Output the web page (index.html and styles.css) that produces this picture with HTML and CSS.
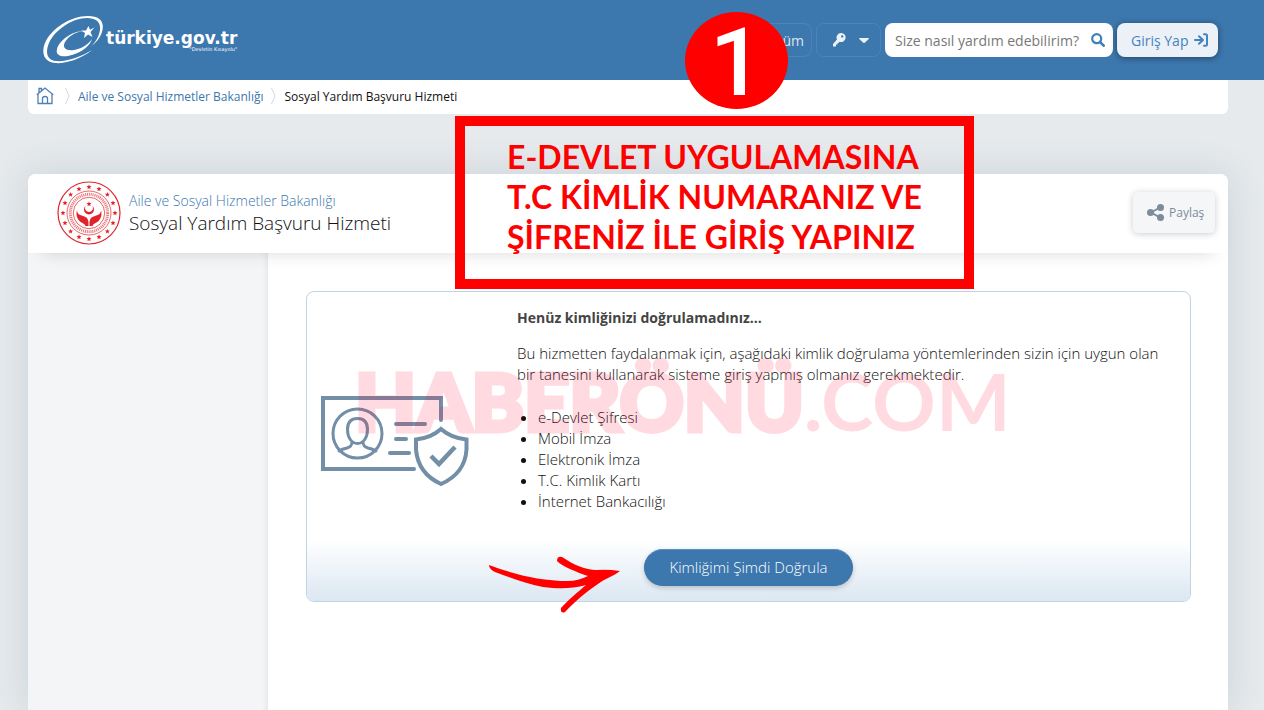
FILE: index.html
```html
<!DOCTYPE html>
<html lang="tr">
<head>
<meta charset="utf-8">
<meta name="viewport" content="width=device-width, initial-scale=1">
<title>Sosyal Yardım Başvuru Hizmeti</title>
<link rel="stylesheet" href="styles.css">
</head>
<body>
<header class="topbar">
  <div class="container topbar-inner">
    <a class="brand" href="#">
      <svg class="brand-mark" viewBox="0 0 62 50" aria-hidden="true">
        <path fill="#fff" d="M50 35C38 45 22 49 13 48C2 47-1 38 3 28C9 14 28 1 46 1C58 1 63 7 60 17C58 23 54 28 49 31C54 27 57 21 58 15C59 7 54 3 45 3C30 3 13 15 7 28C3 38 5 45 14 46C24 47 39 42 50 35Z"/>
        <path fill="#fff" d="M41 16C30 16 17 26 15 34C13 41 21 43 30 40C40 37 48 31 50 24C45 31 38 34 32 35C24 36 20 33 23 27C26 22 33 17 41 16Z"/>
        <path fill="#fff" d="m52.500 12.500-4 4.500 2 5-4.500-2.500-4 3.500 1-5-4-2.500h5l2.500-4.500 1.500 3.700z"/>
      </svg>
      <span class="brand-words"><span class="brand-name">türkiye.gov.tr</span><span class="brand-tag">"Devletin Kısayolu"</span></span>
    </a>
    <nav class="tools">
      <button class="ghost" type="button">Hızlı Çözüm</button>
      <button class="ghost key" type="button" aria-label="Hızlı giriş">
        <svg width="13" height="15" viewBox="0 0 13 15" aria-hidden="true"><path fill="#edf2f7" fill-rule="evenodd" d="M8 0a4.500 4.500 0 1 1-1.500 8.700L5.500 10H4.500v1.500H3V13.500H0v-2.500l4-4.500A4.500 4.500 0 0 1 8 0Zm1.200 2.200a1.200 1.200 0 1 0 0 2.400 1.200 1.200 0 0 0 0-2.400Z"/></svg>
        <svg width="10" height="5" viewBox="0 0 10 5" aria-hidden="true"><path fill="#edf2f7" d="M.5 0h9q.8.300.2 1L5.700 4.700q-.7.500-1.400 0L.3 1Q-.3.300.5 0Z"/></svg>
      </button>
      <form class="search">
        <input type="text" aria-label="Arama" placeholder="Size nasıl yardım edebilirim?">
        <button type="button" aria-label="Ara"><svg width="14" height="14" viewBox="0 0 14 14" aria-hidden="true"><circle cx="5.700" cy="5.700" r="4.500" fill="none" stroke="#4080b8" stroke-width="2.200"/><path d="m9 9 3.700 3.700" stroke="#4080b8" stroke-width="2.600" stroke-linecap="round"/></svg></button>
      </form>
      <button class="login" type="button">Giriş Yap
        <svg width="14" height="14" viewBox="0 0 14 14" aria-hidden="true"><path fill="none" stroke="#4583be" stroke-width="2" stroke-linecap="round" stroke-linejoin="round" d="M1 7h7M5 3.200 9 7l-4 3.800M10 1.300h1.500q1.500 0 1.500 1.500v8.400q0 1.500-1.500 1.500H10"/></svg>
      </button>
    </nav>
  </div>
</header>

<div class="container page">
  <nav class="crumbs" aria-label="Konum">
    <a class="home" href="#" aria-label="Ana sayfa"><svg width="18" height="18" viewBox="0 0 18 18" aria-hidden="true"><path fill="none" stroke="#4a82b5" stroke-width="1.300" d="M.8 7.700 9 1l8.200 6.700M2 7v9.500h14V7M6.500 16.500v-5q0-2 2.500-2t2.500 2v5M3 5.500v-4h2.500v2"/></svg></a>
    <svg width="5" height="18" viewBox="0 0 5 18" aria-hidden="true"><path fill="none" stroke="#d5d9dd" d="M.5 1 4 9 .5 17"/></svg>
    <a href="#">Aile ve Sosyal Hizmetler Bakanlığı</a>
    <svg width="5" height="18" viewBox="0 0 5 18" aria-hidden="true"><path fill="none" stroke="#d5d9dd" d="M.5 1 4 9 .5 17"/></svg>
    <span>Sosyal Yardım Başvuru Hizmeti</span>
  </nav>

  <main class="card">
    <div class="card-head">
      <svg class="seal" width="64" height="64" viewBox="0 0 64 64" aria-hidden="true">
        <defs><path id="star" fill="#e1242b" d="m0-2.500.7 1.600 1.800.1-1.400 1.200.5 1.800L0 1.200l-1.600 1 .5-1.800-1.400-1.200 1.800-.1z"/></defs>
        <g fill="none" stroke="#e1242b">
          <circle cx="32" cy="32" r="31" stroke-width="1.200"/>
          <circle cx="32" cy="32" r="22" stroke-width=".7"/>
          <circle cx="32" cy="32" r="18.700" stroke-width="3" stroke-dasharray="1.100 .8" stroke-opacity=".6"/>
          <circle cx="32" cy="32" r="15.700" stroke-width=".7"/>
        </g>
        <g transform="translate(32 32)">
          <use href="#star" y="-26"/><use href="#star" x="10" y="-24"/><use href="#star" x="18.400" y="-18.400"/><use href="#star" x="24" y="-10"/>
          <use href="#star" x="26"/><use href="#star" x="24" y="10"/><use href="#star" x="18.400" y="18.400"/><use href="#star" x="10" y="24"/>
          <use href="#star" y="26"/><use href="#star" x="-10" y="24"/><use href="#star" x="-18.400" y="18.400"/><use href="#star" x="-24" y="10"/>
          <use href="#star" x="-26"/><use href="#star" x="-24" y="-10"/><use href="#star" x="-18.400" y="-18.400"/><use href="#star" x="-10" y="-24"/>
          <use href="#star" y="-9"/>
        </g>
        <path fill="#e1242b" d="M28.500 25a5 5 0 1 0 7 0 4 4 0 1 1-7 0ZM20 29c0 4 3 5 6 6 4 1 5 3 5.500 6v4h-3c-1-3-4-3-6-5-3-3-3.500-7-2.500-11ZM44 29c0 4-3 5-6 6-4 1-5 3-5.500 6v4h3c1-3 4-3 6-5 3-3 3.500-7 2.500-11Z"/>
      </svg>
      <h1 class="titles"><a href="#">Aile ve Sosyal Hizmetler Bakanlığı</a><span>Sosyal Yardım Başvuru Hizmeti</span></h1>
      <button class="share" type="button">
        <svg width="17" height="17" viewBox="0 0 17 17" aria-hidden="true"><path d="M13 3.500 4 8.500l9 5" fill="none" stroke="#7b8c9c" stroke-width="2"/><g fill="#7b8c9c"><circle cx="13.500" cy="3.500" r="3.500"/><circle cx="3.500" cy="8.500" r="3.500"/><circle cx="13.500" cy="13.500" r="3.500"/></g></svg>
        Paylaş
      </button>
    </div>
    <div class="card-body">
      <aside class="side"></aside>
      <div class="content">
        <section class="verify">
          <div class="verify-main">
            <div class="picture">
              <svg width="149" height="92" viewBox="0 0 149 92" aria-hidden="true">
                <g fill="none" stroke="#738fa8" stroke-linecap="round">
                  <path stroke-width="4" d="M93 74H2V3h118v22"/>
                  <circle cx="36.500" cy="38.500" r="24.500" stroke-width="3"/>
                  <path stroke-width="3" d="M36.500 23.500c-7 0-10 4-10 11 0 8 4 14 10 14s10-6 10-14c0-7-3-11-10-11ZM31 47c0 4-2 5-5 6q-5 1-8 3M42 47c0 4 2 5 5 6q5 1 8 3"/>
                  <path stroke-width="4" d="M75 29h29M75 44h10M69 58h19"/>
                  <path stroke-width="4" d="M120 34q-10 9-25 10.500v10q2 24 25 34.500 24-10.500 25.500-34.500v-10Q130 43 120 34Z"/>
                  <path stroke-width="4.500" stroke-linecap="butt" d="m110 61 8 8 16-17"/>
                </g>
              </svg>
            </div>
            <div class="copy">
              <h2>Henüz kimliğinizi doğrulamadınız...</h2>
              <p>Bu hizmetten faydalanmak için, aşağıdaki kimlik doğrulama yöntemlerinden sizin için uygun olan bir tanesini kullanarak sisteme giriş yapmış olmanız gerekmektedir.</p>
              <ul><li>e-Devlet Şifresi</li><li>Mobil İmza</li><li>Elektronik İmza</li><li>T.C. Kimlik Kartı</li><li>İnternet Bankacılığı</li></ul>
            </div>
          </div>
          <div class="verify-foot"><button class="primary" type="button">Kimliğimi Şimdi Doğrula</button></div>
        </section>
      </div>
    </div>
  </main>
</div>

<div class="step">1</div>
<div class="callout">E-DEVLET UYGULAMASINA<br>T.C KİMLİK NUMARANIZ VE<br>ŞİFRENİZ İLE GİRİŞ YAPINIZ</div>
<div class="watermark"><b>HABERÖNÜ</b>.COM</div>
<svg class="arrow" width="134" height="58" viewBox="0 0 134 58" aria-hidden="true"><path fill="#f00" d="M1 9C25 18 52 25 80 25Q90 25 100 20C88 16 74 10 69 5Q69 0 74 1C86 9 98 14 108 14Q120 13 132 15C126 20 116 23 110 28C96 37 86 47 77 56Q72 58 73 52C82 42 90 36 98 29C84 33 70 33 55 31C38 28 21 21 7 16Q1 13 1 9Z"/></svg>
</body>
</html>
```

FILE: styles.css
```css
* { box-sizing: border-box; }
body {
  margin: 0;
  position: relative;
  min-height: 100vh;
  display: flex;
  flex-direction: column;
  background: #e6eaed;
  color: #111;
  font: 15px/21px "Open Sans", "Noto Sans", sans-serif;
}
button, input { font: inherit; }
a { color: #3c77ae; text-decoration: none; }
svg { flex: none; display: block; }
.container { width: calc(100% - 64px); margin: 0 36px 0 28px; }
.page { flex: 1; display: flex; flex-direction: column; }

.topbar { background: #3c77ae; }
.topbar-inner { min-height: 80px; display: flex; align-items: center; justify-content: space-between; padding: 0 10px 0 14px; }
.brand { display: flex; align-items: center; gap: 2px; color: #fff; }
.brand-mark { width: 62px; height: 50px; }
.brand-words { display: flex; flex-direction: column; }
.brand-name { font: bold 17px/18px "DejaVu Sans", sans-serif; }
.brand-tag { align-self: flex-end; font: 5px/5px "DejaVu Sans", sans-serif; }
.tools { display: flex; gap: 4px; }
.tools button { height: 34px; }
.ghost { padding: 0 7px; border: 1px solid #4a84b9; border-radius: 8px; background: transparent; color: #dce7f1; font-size: 14px; }
.key { width: 65px; display: flex; align-items: center; justify-content: center; gap: 13px; padding-left: 12px; }
.search { display: flex; width: 228px; height: 34px; border-radius: 8px; background: #fff; }
.search input { flex: 1; min-width: 0; padding: 0 0 0 10px; border: 0; background: none; font-size: 14px; }
.search input::placeholder { color: #777; opacity: 1; }
.search button { width: 30px; padding: 0 8px; border: 0; background: none; }
.login { width: 101px; display: flex; align-items: center; justify-content: space-between; padding: 0 10px 0 14px; border: 0; border-radius: 8px; background: #ecf1f7; color: #4583be; font-size: 14px; box-shadow: 0 1px 6px rgba(0, 0, 0, .45); white-space: nowrap; }

.crumbs { min-height: 34px; display: flex; align-items: center; gap: 8px; padding: 0 8px 2px; border-radius: 0 0 6px 6px; background: #fff; font-size: 12px; }
.home { margin-right: 3px; }

.card { flex: 1; display: flex; flex-direction: column; margin-top: 60px; border-radius: 8px 8px 0 0; background: #fff; box-shadow: 0 0 36px rgba(60, 80, 95, .16); }
.card-head { position: relative; min-height: 79px; display: flex; align-items: center; gap: 8px; padding: 0 13px 2px 29px; border-radius: 8px 8px 0 0; background: #fff; box-shadow: 0 14px 16px -14px rgba(0, 0, 0, .15); }
.titles { flex: 1; margin: 0; display: flex; flex-direction: column; font-size: 19px; line-height: 24px; font-weight: 300; }
.titles a { font-size: 14px; line-height: 20px; }
.share { width: 82px; height: 41px; display: flex; align-items: center; gap: 5px; padding: 0 0 0 14px; border: 0; border-radius: 5px; background: #f5f6f8; color: #7b8c9c; font-size: 12px; box-shadow: 0 1px 7px rgba(0, 0, 0, .2); }
.card-body { flex: 1; display: flex; }
.side { width: 240px; background: #f3f5f7; box-shadow: inset -5px 0 6px -4px rgba(0, 0, 0, .08); }
.content { flex: 1; padding: 38px 37px 38px 38px; }

.verify { border: 1px solid #bed5e6; border-radius: 8px; overflow: hidden; }
.verify-main { display: flex; padding: 15px 16px 28px 14px; }
.picture { width: 196px; flex: none; padding-top: 88px; }
.copy { flex: 1; font-weight: 350; }
.copy h2 { margin: 0 0 15px; color: #444; font-size: 14px; line-height: 21px; font-weight: 700; }
.copy p { margin: 0 0 22px; }
.copy ul { margin: 0; padding-left: 21px; }
.verify-foot { display: flex; justify-content: center; padding: 9px 0 15px; background: linear-gradient(#fff, #dbe7f2); }
.primary { height: 37px; padding: 0 24px; border: 1px solid #3c77ae; border-top-color: #5c90bd; border-radius: 19px; background: #3c77ae; color: #fff; font-weight: 350; box-shadow: 0 2px 5px rgba(0, 0, 0, .2); }

.step { position: absolute; left: 685px; top: 12px; width: 103px; height: 97px; border-radius: 50%; background: #f00; color: #fff; font: 500 94px/102px Roboto, sans-serif; text-align: center; }
.callout { position: absolute; left: 455px; top: 116px; width: 519px; height: 173px; padding: 11px 0 0 42px; border: 10px solid #f00; color: #f00; font: bold 32px/40px Lato, sans-serif; white-space: nowrap; }
.watermark { position: absolute; left: 355px; top: 353px; color: #ff0032; opacity: .14; font: bold 79px/96px Lato, sans-serif; white-space: nowrap; pointer-events: none; }
.watermark b { -webkit-text-stroke: 5px #ff0032; }
.arrow { position: absolute; left: 488px; top: 556px; pointer-events: none; }
```
